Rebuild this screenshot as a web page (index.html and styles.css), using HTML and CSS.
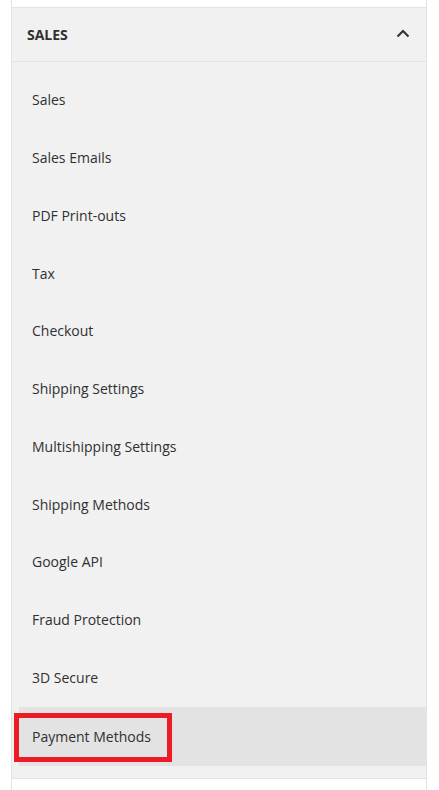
FILE: index.html
```html
<!DOCTYPE html>
<html>
<head>
<meta charset="utf-8">
<link rel="stylesheet" href="styles.css">
</head>
<body>
<div class="nav">
  <div class="prev-section"></div>
  <div class="section">
    <div class="section-head">
      <span class="section-title">SALES</span>
      <svg class="chevron" width="14" height="9" viewBox="0 0 14 9"><path d="M1.5 7.5 L7 2 L12.5 7.5" fill="none" stroke="#303030" stroke-width="2"/></svg>
    </div>
    <ul class="items">
      <li class="item">Sales</li>
      <li class="item">Sales Emails</li>
      <li class="item">PDF Print-outs</li>
      <li class="item">Tax</li>
      <li class="item">Checkout</li>
      <li class="item">Shipping Settings</li>
      <li class="item">Multishipping Settings</li>
      <li class="item">Shipping Methods</li>
      <li class="item">Google API</li>
      <li class="item">Fraud Protection</li>
      <li class="item">3D Secure</li>
      <li class="item active">Payment Methods<span class="highlight-box"></span></li>
    </ul>
  </div>
  <div class="next-section"></div>
</div>
</body>
</html>
```

FILE: styles.css
```css
html, body {
  margin: 0;
  padding: 0;
  background: #ffffff;
}
body {
  font-family: "Open Sans", "Liberation Sans", sans-serif;
  color: #303030;
  font-size: 14px;
}
.nav {
  margin-left: 11px;
  width: 416px;
  box-sizing: border-box;
  border-left: 1px solid #e3e3e3;
  border-right: 1px solid #e3e3e3;
  height: 790px;
  display: flex;
  flex-direction: column;
}
.prev-section {
  height: 7px;
  background: #ffffff;
  border-bottom: 1px solid #e3e3e3;
}
.section {
  background: #f1f1f1;
  border-bottom: 1px solid #e3e3e3;
}
.section-head {
  height: 53px;
  border-bottom: 1px solid #e3e3e3;
  display: flex;
  align-items: center;
  justify-content: space-between;
  padding: 0 16px 0 15px;
}
.section-title {
  font-weight: 700;
  font-size: 14px;
  color: #303030;
}
.chevron {
  display: block;
  margin-top: -2px;
}
.items {
  list-style: none;
  margin: 0;
  padding: 9px 0 12px 7px;
}
.item {
  height: 57.75px;
  display: flex;
  align-items: center;
  padding-left: 13px;
  position: relative;
}
.item.active {
  background: #e3e3e3;
  margin-top: 1px;
  height: 58.5px;
}
.highlight-box {
  position: absolute;
  left: -5px;
  top: 6px;
  width: 158px;
  height: 49px;
  box-sizing: border-box;
  border: 5px solid #ed1c24;
}
.next-section {
  flex: 1;
  background: #ffffff;
}
```
